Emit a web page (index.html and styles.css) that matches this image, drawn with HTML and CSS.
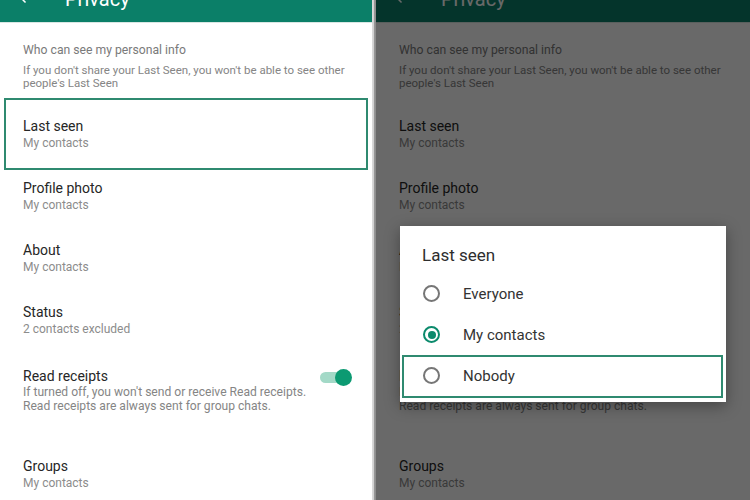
FILE: index.html
```html
<!DOCTYPE html>
<html lang="en">
<head>
  <meta charset="UTF-8">
  <meta name="viewport" content="width=device-width, initial-scale=1.0">
  <title>Privacy</title>
  <link rel="stylesheet" href="styles.css">
</head>
<body>
  <div class="screens">
    <!-- before: settings list -->
    <div class="phone">
      <div class="topbar">
        <div class="topbar-inner">
          <svg class="back" width="18" height="18" viewBox="0 0 24 24"><path d="M20 11H7.83l5.59-5.59L12 4l-8 8 8 8 1.41-1.41L7.83 13H20v-2z" fill="#fff"/></svg>
          <span class="title">Privacy</span>
        </div>
      </div>
      <div class="info">
        <div class="info-title">Who can see my personal info</div>
        <div class="info-text">If you don't share your Last Seen, you won't be able to see other people's Last Seen</div>
      </div>
      <div class="row marked">
        <div class="row-title">Last seen</div>
        <div class="row-sub">My contacts</div>
      </div>
      <div class="row">
        <div class="row-title">Profile photo</div>
        <div class="row-sub">My contacts</div>
      </div>
      <div class="row">
        <div class="row-title">About</div>
        <div class="row-sub">My contacts</div>
      </div>
      <div class="row">
        <div class="row-title">Status</div>
        <div class="row-sub">2 contacts excluded</div>
      </div>
      <div class="row receipts">
        <div class="receipts-text">
          <div class="row-title">Read receipts</div>
          <div class="receipts-sub">If turned off, you won't send or receive Read receipts.<br>Read receipts are always sent for group chats.</div>
        </div>
        <div class="toggle"><span class="knob"></span></div>
      </div>
      <div class="row">
        <div class="row-title">Groups</div>
        <div class="row-sub">My contacts</div>
      </div>
    </div>

    <div class="divider"></div>

    <!-- after: dialog open -->
    <div class="phone dimmed">
      <div class="topbar">
        <div class="topbar-inner">
          <svg class="back" width="18" height="18" viewBox="0 0 24 24"><path d="M20 11H7.83l5.59-5.59L12 4l-8 8 8 8 1.41-1.41L7.83 13H20v-2z" fill="#fff"/></svg>
          <span class="title">Privacy</span>
        </div>
      </div>
      <div class="info">
        <div class="info-title">Who can see my personal info</div>
        <div class="info-text">If you don't share your Last Seen, you won't be able to see other people's Last Seen</div>
      </div>
      <div class="row">
        <div class="row-title">Last seen</div>
        <div class="row-sub">My contacts</div>
      </div>
      <div class="row">
        <div class="row-title">Profile photo</div>
        <div class="row-sub">My contacts</div>
      </div>
      <div class="row">
        <div class="row-title">About</div>
        <div class="row-sub">My contacts</div>
      </div>
      <div class="row">
        <div class="row-title">Status</div>
        <div class="row-sub">2 contacts excluded</div>
      </div>
      <div class="row receipts">
        <div class="receipts-text">
          <div class="row-title">Read receipts</div>
          <div class="receipts-sub">If turned off, you won't send or receive Read receipts.<br>Read receipts are always sent for group chats.</div>
        </div>
        <div class="toggle"><span class="knob"></span></div>
      </div>
      <div class="row">
        <div class="row-title">Groups</div>
        <div class="row-sub">My contacts</div>
      </div>

      <div class="scrim"></div>
      <div class="dialog">
        <div class="dialog-title">Last seen</div>
        <div class="option"><span class="radio"></span>Everyone</div>
        <div class="option"><span class="radio checked"></span>My contacts</div>
        <div class="option marked"><span class="radio"></span>Nobody</div>
      </div>
    </div>
  </div>
</body>
</html>
```

FILE: styles.css
```css
body {
  margin: 0;
  width: 750px;
  height: 500px;
  overflow: hidden;
  font-family: Roboto, "Noto Sans", Arial, sans-serif;
  background: #fff;
}
.screens {
  display: flex;
  height: 500px;
}
.phone {
  position: relative;
  width: 372px;
  height: 500px;
  overflow: hidden;
  background: #fff;
}
.phone.dimmed {
  width: 374px;
}
.divider {
  width: 4px;
  background: linear-gradient(90deg, #dcdcdc 0%, #cfcfcf 50%, #9a9a9a 50%, #8a8a8a 100%);
}

.topbar {
  height: 22px;
  overflow: hidden;
  background: #0b7f68;
  box-shadow: 0 1px 0 #d9e6e3;
}
.topbar-inner {
  display: flex;
  align-items: flex-start;
  margin-top: -11px;
}
.back {
  margin: -1px 0 0 16px;
}
.title {
  margin-left: 31px;
  font-size: 20px;
  line-height: 20px;
  color: #fff;
}

.info {
  padding: 19px 10px 8px 23px;
}
.info-title {
  font-size: 12.2px;
  line-height: 18px;
  color: #7a7a7a;
}
.info-text {
  margin-top: 5px;
  font-size: 11.5px;
  line-height: 13px;
  color: #858585;
}

.row {
  position: relative;
  height: 62px;
  box-sizing: border-box;
  padding: 19px 23px 0;
}
.row-title {
  font-size: 14px;
  line-height: 18px;
  color: #262626;
}
.row-sub {
  font-size: 12px;
  line-height: 16px;
  color: #8c8c8c;
}
.marked::after {
  content: "";
  position: absolute;
  top: 0;
  left: 4px;
  right: 4px;
  bottom: -10px;
  border: 2px solid #2f8a70;
}

.row.receipts {
  height: 92px;
  padding-top: 21px;
  display: flex;
  justify-content: space-between;
}
.receipts-sub {
  font-size: 12.1px;
  line-height: 14px;
  color: #858585;
}
.toggle {
  position: relative;
  flex-shrink: 0;
  width: 26px;
  height: 11px;
  margin: 5px 3px 0 0;
  border-radius: 6px;
  background: #a3d9c7;
}
.knob {
  position: absolute;
  top: -3px;
  right: -6px;
  width: 17px;
  height: 17px;
  border-radius: 50%;
  background: #0c9a72;
}
.dimmed .toggle {
  visibility: hidden;
}

.scrim {
  position: absolute;
  inset: 0;
  background: rgba(0, 0, 0, 0.59);
}
.dialog {
  position: absolute;
  left: 24px;
  top: 226px;
  width: 326px;
  height: 176px;
  background: #fff;
  box-shadow: 0 4px 14px rgba(0, 0, 0, 0.35);
}
.dialog-title {
  padding: 19px 0 0 22px;
  font-size: 17px;
  line-height: 20px;
  color: #2e2e2e;
  margin-bottom: 8px;
}
.option {
  position: relative;
  display: flex;
  align-items: center;
  height: 41px;
  padding-left: 23px;
  font-size: 15px;
  color: #333;
}
.option.marked::after {
  top: 0;
  left: 2px;
  right: 3px;
  bottom: -2px;
}
.radio {
  width: 13px;
  height: 13px;
  margin-right: 23px;
  border: 2px solid #767676;
  border-radius: 50%;
  display: flex;
  align-items: center;
  justify-content: center;
}
.radio.checked {
  border-color: #0b8a6c;
}
.radio.checked::before {
  content: "";
  width: 8px;
  height: 8px;
  border-radius: 50%;
  background: #0b8a6c;
}
```
